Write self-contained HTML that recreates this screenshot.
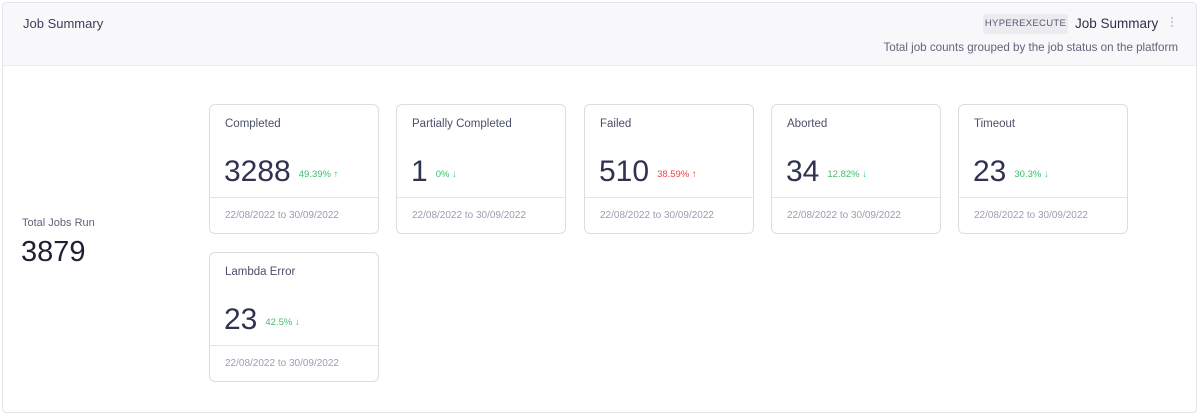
<!DOCTYPE html>
<html><head><style>
body{margin:0;width:1200px;height:418px;background:#fff;font-family:"Liberation Sans",sans-serif;overflow:hidden}
.box{position:absolute;left:2px;top:2px;width:1195px;height:411px;border:1px solid #e3e4ea;border-radius:4px;box-sizing:border-box;overflow:hidden}
.hdr{position:absolute;left:0;top:0;right:0;height:62px;background:#f8f8fa;border-bottom:1px solid #ececf1}
.t{position:absolute;left:20px;top:13px;font-size:13px;color:#3c3f55}
.badge{position:absolute;left:980px;top:11px;width:85px;height:20px;background:#ebebf0;border-radius:3px;font-size:9.5px;color:#555a70;text-align:center;line-height:20px;letter-spacing:.3px}
.t2{position:absolute;left:1072px;top:13px;font-size:13.5px;color:#2f3247}
.dots{position:absolute;left:1167px;top:13px;font-size:11px;color:#777;line-height:4px;width:4px;text-align:center}
.sub{position:absolute;right:18px;top:38px;font-size:11.6px;color:#5f647a}
.tot{position:absolute;left:22px;top:217px;font-size:11px;color:#5f647a}
.totn{position:absolute;left:21px;top:236px;font-size:29px;color:#1f2033}
.card{position:absolute;width:170px;height:130px;border:1px solid #dcdde4;border-radius:6px;box-sizing:border-box}
.card .l{position:absolute;left:15px;top:13px;font-size:11.5px;color:#4c5068}
.card .n{position:absolute;left:14px;top:50px;font-size:30px;color:#2f3350}
.card .p{font-size:9.5px;margin-left:8px;vertical-align:4px}
.g{color:#3cbf6a}.r{color:#ee4545}
.card .dv{position:absolute;left:0;right:0;top:92px;border-top:1px solid #e3e4ea}
.card .d{position:absolute;left:15px;top:105px;font-size:10px;color:#9a9db0}
</style></head><body>
<div class="box">
<div class="hdr">
<div class="t">Job Summary</div>
<div class="badge">HYPEREXECUTE</div>
<div class="t2">Job Summary</div>
<div class="dots">·<br>·<br>·</div>
<div class="sub">Total job counts grouped by the job status on the platform</div>
</div>
</div>
<div class="tot">Total Jobs Run</div>
<div class="totn">3879</div>
<div class="card" style="left:209px;top:104px"><div class="l">Completed</div><div class="n">3288<span class="p g">49.39% ↑</span></div><div class="dv"></div><div class="d">22/08/2022 to 30/09/2022</div></div>
<div class="card" style="left:396px;top:104px"><div class="l">Partially Completed</div><div class="n">1<span class="p g">0% ↓</span></div><div class="dv"></div><div class="d">22/08/2022 to 30/09/2022</div></div>
<div class="card" style="left:584px;top:104px"><div class="l">Failed</div><div class="n">510<span class="p r">38.59% ↑</span></div><div class="dv"></div><div class="d">22/08/2022 to 30/09/2022</div></div>
<div class="card" style="left:771px;top:104px"><div class="l">Aborted</div><div class="n">34<span class="p g">12.82% ↓</span></div><div class="dv"></div><div class="d">22/08/2022 to 30/09/2022</div></div>
<div class="card" style="left:958px;top:104px"><div class="l">Timeout</div><div class="n">23<span class="p g">30.3% ↓</span></div><div class="dv"></div><div class="d">22/08/2022 to 30/09/2022</div></div>
<div class="card" style="left:209px;top:252px"><div class="l">Lambda Error</div><div class="n">23<span class="p g">42.5% ↓</span></div><div class="dv"></div><div class="d">22/08/2022 to 30/09/2022</div></div>
</body></html>
